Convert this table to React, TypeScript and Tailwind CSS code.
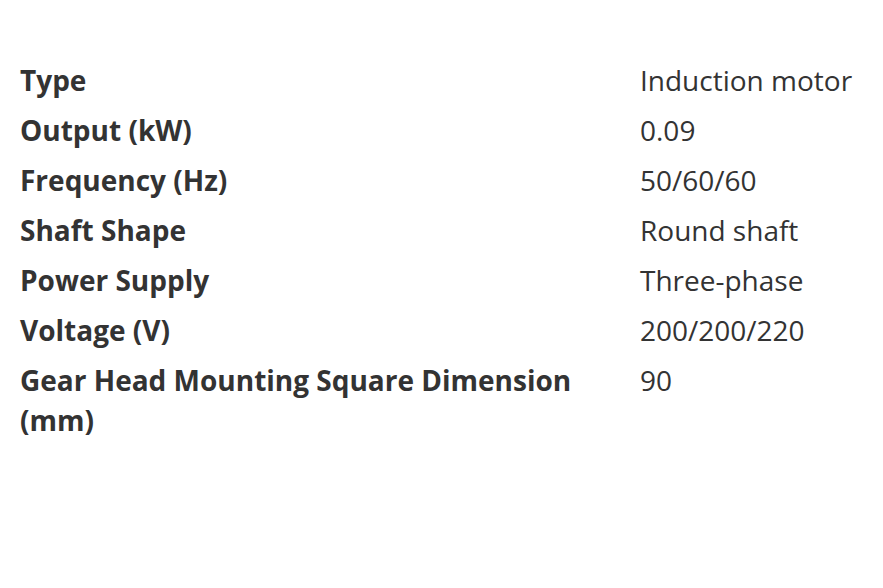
const SPECS: [string, string][] = [
  ["Type", "Induction motor"],
  ["Output (kW)", "0.09"],
  ["Frequency (Hz)", "50/60/60"],
  ["Shaft Shape", "Round shaft"],
  ["Power Supply", "Three-phase"],
  ["Voltage (V)", "200/200/220"],
  ["Gear Head Mounting Square Dimension (mm)", "90"],
];

export default function App() {
  return (
    <div className="min-h-screen bg-white px-5 pt-[55px] font-['Open_Sans',sans-serif] text-[#333333]">
      <table className="w-full border-collapse">
        <tbody>
          {SPECS.map(([label, value]) => (
            <tr key={label}>
              <th className="w-[620px] py-[5px] pr-10 text-left align-top text-[28px] font-bold leading-[40px]">
                {label}
              </th>
              <td className="py-[5px] align-top text-[28px] leading-[40px]">{value}</td>
            </tr>
          ))}
        </tbody>
      </table>
    </div>
  );
}
